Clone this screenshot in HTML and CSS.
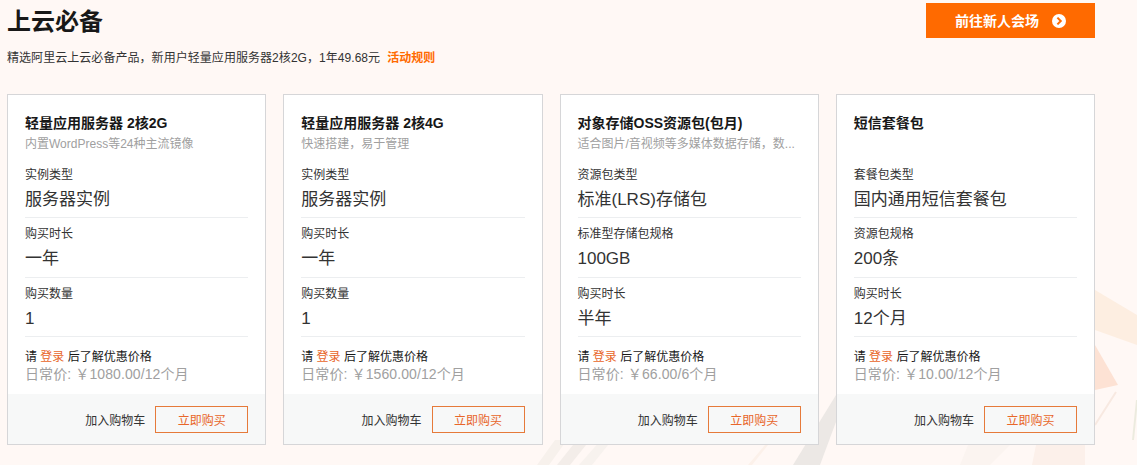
FILE: index.html
```html
<!DOCTYPE html>
<html lang="zh-CN">
<head>
<meta charset="utf-8">
<title>上云必备</title>
<link rel="stylesheet" href="styles.css">
</head>
<body>
<svg class="bg-art" viewBox="0 0 1137 465" width="1137" height="465" aria-hidden="true">
  <polygon points="537,465 555,440 567,440 549,465" fill="#f7f1ec"/>
  <polygon points="557,465 577,440 590,440 570,465" fill="#f3ede9"/>
  <polygon points="579,465 601,440 612,440 592,465" fill="#f7f2ee"/>
  <polygon points="748,465 765,445 768,445 752,465" fill="#fcf1ea"/>
  <polygon points="793,465 836,395 846,395 820,465" fill="#ece8e5"/>
  <polygon points="1032,465 1036,445 1085,445 1085,465" fill="#fcf0ea"/>
  <polygon points="960,465 968,445 1010,445 990,465" fill="#fbf4f0"/>
  <polygon points="1095,290 1137,315 1137,345 1095,330" fill="#fdeee1"/>
  <polygon points="1095,345 1118,385 1095,390" fill="#fde2d4"/>
  <path d="M1116 392 1095 425" stroke="#f8e9e1" stroke-width="2" fill="none"/>
  <path d="M1137 400 1133 440" stroke="#ecebdf" stroke-width="2" fill="none"/>
</svg>
<main class="page">
  <header class="head">
    <div class="head-text">
      <h1 class="title">上云必备</h1>
      <p class="intro">精选阿里云上云必备产品，新用户轻量应用服务器2核2G，1年49.68元<a class="rules">活动规则</a></p>
    </div>
    <a class="cta"><span class="cta-text">前往新人会场</span>
      <svg class="cta-icon" viewBox="0 0 14 14" width="14" height="14" aria-hidden="true">
        <circle cx="7" cy="7" r="7" fill="#fff"/>
        <path d="M5.4 3.6 8.8 7 5.4 10.4" fill="none" stroke="#ff6a00" stroke-width="2"/>
      </svg>
    </a>
  </header>
  <section class="cards">
    <article class="card">
      <div class="body">
        <h2 class="name">轻量应用服务器 2核2G</h2>
        <p class="sub">内置WordPress等24种主流镜像</p>
        <div class="row"><div class="label">实例类型</div><div class="value">服务器实例</div></div>
        <div class="row"><div class="label">购买时长</div><div class="value">一年</div></div>
        <div class="row"><div class="label">购买数量</div><div class="value">1</div></div>
        <p class="login">请 <a class="link">登录</a> 后了解优惠价格</p>
        <p class="price">日常价: ￥1080.00/12个月</p>
      </div>
      <div class="foot"><a class="cart">加入购物车</a><a class="buy">立即购买</a></div>
    </article>
    <article class="card">
      <div class="body">
        <h2 class="name">轻量应用服务器 2核4G</h2>
        <p class="sub">快速搭建，易于管理</p>
        <div class="row"><div class="label">实例类型</div><div class="value">服务器实例</div></div>
        <div class="row"><div class="label">购买时长</div><div class="value">一年</div></div>
        <div class="row"><div class="label">购买数量</div><div class="value">1</div></div>
        <p class="login">请 <a class="link">登录</a> 后了解优惠价格</p>
        <p class="price">日常价: ￥1560.00/12个月</p>
      </div>
      <div class="foot"><a class="cart">加入购物车</a><a class="buy">立即购买</a></div>
    </article>
    <article class="card">
      <div class="body">
        <h2 class="name">对象存储OSS资源包(包月)</h2>
        <p class="sub">适合图片/音视频等多媒体数据存储，数...</p>
        <div class="row"><div class="label">资源包类型</div><div class="value">标准(LRS)存储包</div></div>
        <div class="row"><div class="label">标准型存储包规格</div><div class="value">100GB</div></div>
        <div class="row"><div class="label">购买时长</div><div class="value">半年</div></div>
        <p class="login">请 <a class="link">登录</a> 后了解优惠价格</p>
        <p class="price">日常价: ￥66.00/6个月</p>
      </div>
      <div class="foot"><a class="cart">加入购物车</a><a class="buy">立即购买</a></div>
    </article>
    <article class="card">
      <div class="body">
        <h2 class="name">短信套餐包</h2>
        <p class="sub">&nbsp;</p>
        <div class="row"><div class="label">套餐包类型</div><div class="value">国内通用短信套餐包</div></div>
        <div class="row"><div class="label">资源包规格</div><div class="value">200条</div></div>
        <div class="row"><div class="label">购买时长</div><div class="value">12个月</div></div>
        <p class="login">请 <a class="link">登录</a> 后了解优惠价格</p>
        <p class="price">日常价: ￥10.00/12个月</p>
      </div>
      <div class="foot"><a class="cart">加入购物车</a><a class="buy">立即购买</a></div>
    </article>
  </section>
</main>
</body>
</html>
```
FILE: styles.css
```css
* { box-sizing: border-box; }
html, body { margin: 0; height: 465px; overflow: hidden; }
body {
  position: relative;
  background: #fff8f5;
  color: #181818;
  font-family: "Liberation Sans", "Noto Sans CJK SC", sans-serif;
}
.bg-art { position: absolute; left: 0; top: 0; }
.page { position: relative; padding: 0 42px 0 7px; }
.head { display: flex; justify-content: space-between; align-items: flex-start; height: 94px; }
.title { margin: 8px 0 0; font-size: 24px; line-height: 28px; font-weight: 700; }
.intro { margin: 14px 0 0; font-size: 12px; line-height: 16px; color: #333; letter-spacing: 0.05px; }
.rules { margin-left: 7px; color: #ff6a00; font-weight: 700; }
.cta {
  margin-top: 3px;
  width: 169px;
  height: 35px;
  display: flex;
  align-items: center;
  justify-content: center;
  gap: 13px;
  background: #ff6a00;
  color: #fff;
  font-size: 14px;
  font-weight: 700;
}
.cta-text { margin-bottom: 2px; }
.cards { display: grid; grid-template-columns: repeat(4, minmax(0, 1fr)); gap: 17px; }
.card { height: 351px; background: #fff; border: 1px solid #d6d6d8; display: flex; flex-direction: column; min-width: 0; }
.body { flex: 1; padding: 18px 17px 0; min-height: 0; }
.name { margin: 0; font-size: 14px; line-height: 20px; font-weight: 700; color: #181818; }
.sub { margin: 2px 0 0; font-size: 12px; line-height: 18px; color: #a0a0a0; white-space: nowrap; }
.row { padding-top: 7px; height: 60px; border-bottom: 1px solid #eceef0; }
.sub + .row { height: 65px; padding-top: 13px; }
.row:last-of-type { height: 59px; }
.label { font-size: 12px; line-height: 18px; color: #333; }
.value { margin-top: 4px; font-size: 17px; line-height: 24px; color: #333; }
.login { margin: 12px 0 0; font-size: 12px; line-height: 17px; color: #181818; }
.link { color: #e8662a; }
.price { margin: 0; font-size: 14px; line-height: 17px; color: #a0a0a0; letter-spacing: 0.1px; }
.foot {
  flex: none;
  height: 50px;
  background: #f7f8f8;
  display: flex;
  justify-content: flex-end;
  align-items: center;
  gap: 10px;
  padding: 0 17px;
}
.cart { font-size: 12px; color: #333; }
.buy {
  width: 93px;
  height: 27px;
  border: 1px solid #e67a3a;
  color: #e8662a;
  font-size: 12px;
  display: flex;
  align-items: center;
  justify-content: center;
}
```
